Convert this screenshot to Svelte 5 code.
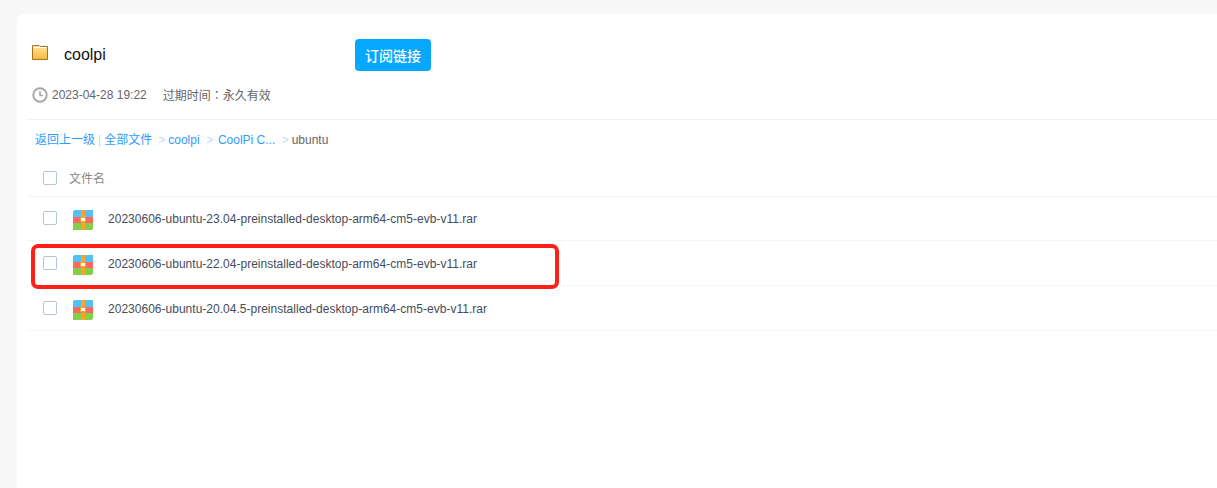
<script>
  const files = [
    { name: '20230606-ubuntu-23.04-preinstalled-desktop-arm64-cm5-evb-v11.rar' },
    { name: '20230606-ubuntu-22.04-preinstalled-desktop-arm64-cm5-evb-v11.rar', marked: true },
    { name: '20230606-ubuntu-20.04.5-preinstalled-desktop-arm64-cm5-evb-v11.rar' }
  ];
</script>

<div class="page">
  <div class="panel">
    <div class="head">
      <div class="title">
        <svg class="folder" width="16" height="15" viewBox="0 0 16 15">
          <defs>
            <linearGradient id="fg" x1="0" y1="0" x2="0" y2="1">
              <stop offset="0" stop-color="#fee6a0" />
              <stop offset="1" stop-color="#f6b93b" />
            </linearGradient>
          </defs>
          <path d="M.5 14.500V.5h6.500l1 1h7.500v13z" fill="url(#fg)" stroke="#a8701a" />
          <path d="M1.500 2.500h13" stroke="#fff" />
        </svg>
        <span class="name">coolpi</span>
        <button class="sub">订阅链接</button>
      </div>
      <div class="meta">
        <svg width="16" height="16" viewBox="0 0 16 16" fill="none" stroke="#a8a8a8">
          <circle cx="8" cy="8" r="6.700" stroke-width="1.900" />
          <path d="M8 4v4.500h3" stroke-width="1.600" />
        </svg>
        <span class="date">2023-04-28 19:22</span>
        <span>过期时间<span class="colon">：</span>永久有效</span>
      </div>
    </div>

    <div class="crumbs">
      <a href="#top">返回上一级</a><i class="bar">|</i><a href="#top">全部文件</a>
      <i class="sep first">&gt;</i><a href="#top">coolpi</a>
      <i class="sep wide">&gt;</i><a href="#top">CoolPi C...</a>
      <i class="sep">&gt;</i><span>ubuntu</span>
    </div>

    <div class="header">
      <span class="check"></span>
      <span class="col">文件名</span>
    </div>

    {#each files as file}
      <div class="row">
        <span class="check"></span>
        <svg class="rar" width="20" height="20" viewBox="0 0 20 20" shape-rendering="crispEdges">
          <rect width="20" height="20" rx="2" fill="#ff6760" />
          <path d="M2 0h16a2 2 0 0 1 2 2v5H0V2a2 2 0 0 1 2-2z" fill="#52c1f7" />
          <path d="M0 13h20v5a2 2 0 0 1-2 2H2a2 2 0 0 1-2-2z" fill="#84cf4a" />
          <rect x="8" width="4" height="20" fill="#fba32a" />
          <rect x="7" y="7" width="6" height="5" fill="#fba32a" />
          <rect x="8" y="8" width="4" height="3" fill="#fff" />
        </svg>
        <span class="file">{file.name}</span>
        {#if file.marked}<span class="mark"></span>{/if}
      </div>
    {/each}
  </div>
</div>

<style>
  :global(body) {
    background: #f7f7f7;
    overflow: hidden;
  }
  .page {
    height: 488px;
    padding: 14px 0 0 17px;
    box-sizing: border-box;
    font-family: "Liberation Sans", "Noto Sans CJK SC", sans-serif;
    font-size: 12px;
  }
  .panel {
    height: 100%;
    background: #fff;
    border-radius: 6px 0 0 0;
    padding-left: 10px;
  }
  .head {
    height: 105px;
    padding-left: 5px;
    border-bottom: 1px solid #f2f2f2;
  }
  .title {
    display: flex;
    align-items: center;
    height: 32px;
    padding-top: 25px;
  }
  .folder {
    margin-top: -6px;
  }
  .name {
    width: 291px;
    margin-left: 16px;
    font-size: 16px;
    color: #111;
  }
  .sub {
    width: 76px;
    height: 32px;
    padding: 0;
    border: 0;
    border-radius: 4px;
    background: #06a7ff;
    color: #fff;
    font: inherit;
    font-size: 14px;
    font-weight: 500;
  }
  .meta {
    display: flex;
    align-items: center;
    margin-top: 15px;
    color: #666;
  }
  .date {
    margin: 0 16px 0 4px;
  }
  .colon {
    font-family: "Noto Sans CJK TC", sans-serif;
  }
  .crumbs {
    height: 40px;
    padding-left: 8px;
    line-height: 40px;
    color: #666;
    white-space: nowrap;
  }
  .crumbs a {
    color: #2f9bff;
    text-decoration: none;
  }
  .crumbs i {
    font-style: normal;
    color: #c5d8f0;
  }
  .bar {
    margin: 0 3px;
  }
  .sep {
    margin: 0 3px;
  }
  .sep.first {
    margin: 0 3px 0 2.700px;
  }
  .sep.wide {
    margin: 0 4.500px 0 3.500px;
  }
  .header {
    display: flex;
    align-items: center;
    box-sizing: border-box;
    height: 37px;
    padding-left: 16px;
    color: #888;
    border-bottom: 1px solid #f3f5f8;
  }
  .header .col {
    margin: -2px 0 0 12px;
  }
  .row {
    position: relative;
    display: flex;
    align-items: flex-start;
    box-sizing: border-box;
    height: 45px;
    padding: 14px 0 0 16px;
    border-bottom: 1px solid #f3f5f8;
  }
  .header + .row {
    height: 44px;
    padding-top: 13px;
  }
  .check {
    width: 12px;
    height: 12px;
    border: 1px solid #b8c4d2;
    border-radius: 2px;
  }
  .row .check {
    margin-top: 1px;
  }
  .rar {
    margin-left: 16px;
  }
  .file {
    margin: 1px 0 0 15px;
    line-height: 16px;
    color: #454d5a;
    letter-spacing: 0.015px;
  }
  .mark {
    position: absolute;
    left: 4px;
    top: 3px;
    box-sizing: border-box;
    width: 528px;
    height: 45px;
    border: 4px solid #ff2016;
    border-radius: 7px;
  }
</style>
